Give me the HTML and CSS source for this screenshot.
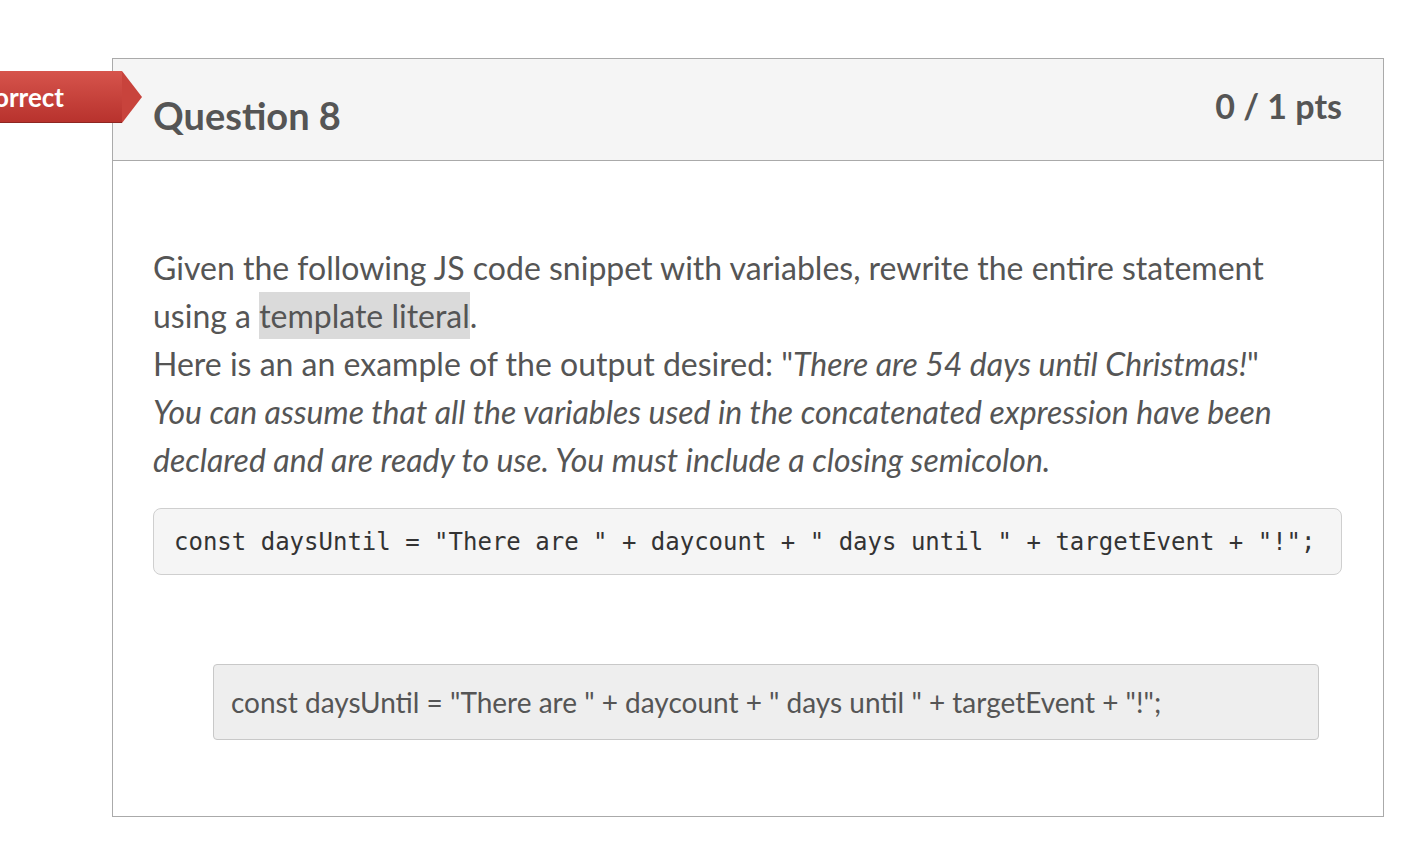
FILE: index.html
```html
<!DOCTYPE html>
<html>
<head>
<meta charset="utf-8">
<link rel="stylesheet" href="styles.css">
</head>
<body>
<div class="page">
  <div class="card">
    <div class="ribbon"><span class="ribbon-text">Incorrect</span></div>
    <div class="card-header">
      <h2 class="q-title">Question 8</h2>
      <div class="q-pts">0 / 1 pts</div>
    </div>
    <div class="card-body">
      <p class="q-text">Given the following JS code snippet with variables, rewrite the entire statement using a <span class="hl">template literal</span>.<br>Here is an an example of the output desired: "<em>There are 54 days until Christmas!</em>"<br><em>You can assume that all the variables used in the concatenated expression have been declared and are ready to use. You must include a closing semicolon.</em></p>
      <pre class="code">const daysUntil = "There are " + daycount + " days until " + targetEvent + "!";</pre>
      <div class="answer">const daysUntil = "There are " + daycount + " days until " + targetEvent + "!";</div>
    </div>
  </div>
</div>
</body>
</html>
```
FILE: styles.css
```css
html, body {
  margin: 0;
  padding: 0;
  background: #fff;
}
body {
  font-family: Lato, "Open Sans", sans-serif;
  color: #555;
}
.page {
  padding: 58px 0 0 112px;
}
.card {
  position: relative;
  width: 1270px;
  height: 757px;
  border: 1px solid #aaaaaa;
  box-sizing: content-box;
}
.ribbon {
  position: absolute;
  left: -191px;
  top: 12px;
  width: 200px;
  height: 52px;
  background: linear-gradient(#d6544c, #b8322d);
  border-bottom: 1px solid #8e2622;
  box-sizing: border-box;
  display: flex;
  align-items: center;
  justify-content: flex-end;
  padding-right: 58px;
  z-index: 2;
}
.ribbon::after {
  content: "";
  position: absolute;
  right: -20px;
  top: 0;
  width: 0;
  height: 0;
  border-top: 26px solid transparent;
  border-bottom: 26px solid transparent;
  border-left: 20px solid #c8433c;
}
.ribbon-text {
  color: #fff;
  font-weight: 700;
  font-size: 26px;
  margin-top: 0;
  white-space: nowrap;
}
.card-header {
  background: #f5f5f5;
  border-bottom: 1px solid #aaaaaa;
  height: 102px;
  box-sizing: border-box;
  display: flex;
  justify-content: space-between;
  align-items: flex-start;
  padding: 0 41px 0 40px;
}
.q-title {
  margin: 32px 0 0 0;
  font-size: 38px;
  font-weight: 700;
  line-height: 48px;
  color: #555;
}
.q-pts {
  margin-top: 27px;
  font-size: 34px;
  font-weight: 700;
  line-height: 40px;
  color: #555;
}
.card-body {
  padding: 83px 41px 0 40px;
}
.q-text {
  margin: 0;
  font-size: 32px;
  line-height: 48px;
  color: #555;
}
.hl {
  background: #dadada;
  padding: 4px 0;
}
.code {
  margin: 24px 0 0 0;
  height: 67px;
  box-sizing: border-box;
  background: #f5f5f5;
  border: 1px solid #cfcfcf;
  border-radius: 8px;
  padding: 2px 20px 0 20px;
  font-family: "DejaVu Sans Mono", monospace;
  font-size: 24px;
  line-height: 63px;
  color: #333;
  white-space: pre;
}
.answer {
  margin: 89px 23px 0 60px;
  height: 76px;
  box-sizing: border-box;
  background: #eeeeee;
  border: 1px solid #c8c8c8;
  border-radius: 4px;
  padding: 0 17px;
  font-size: 28px;
  line-height: 74px;
  color: #555;
  white-space: pre;
}
```
